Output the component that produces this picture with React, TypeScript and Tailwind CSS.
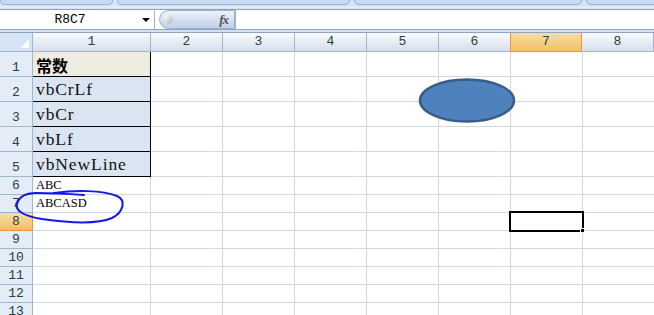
import React from "react";

const cols = ["1", "2", "3", "4", "5", "6", "7", "8"];
const colWidths = ["w-[118px]", "w-[72px]", "w-[72px]", "w-[72px]", "w-[72px]", "w-[72px]", "w-[72px]", "w-[72px]"];

const rows = [
  { n: 1, h: "h-[25px]", text: "常数", kind: "title" },
  { n: 2, h: "h-[25px]", text: "vbCrLf", kind: "const" },
  { n: 3, h: "h-[25px]", text: "vbCr", kind: "const" },
  { n: 4, h: "h-[25px]", text: "vbLf", kind: "const" },
  { n: 5, h: "h-[25px]", text: "vbNewLine", kind: "const" },
  { n: 6, h: "h-[18px]", text: "ABC", kind: "plain" },
  { n: 7, h: "h-[18px]", text: "ABCASD", kind: "plain" },
  { n: 8, h: "h-[18px]", text: "", kind: "plain" },
  { n: 9, h: "h-[18px]", text: "", kind: "plain" },
  { n: 10, h: "h-[18px]", text: "", kind: "plain" },
  { n: 11, h: "h-[18px]", text: "", kind: "plain" },
  { n: 12, h: "h-[18px]", text: "", kind: "plain" },
  { n: 13, h: "h-[18px]", text: "", kind: "plain" },
];

const mono = "font-['Liberation_Mono','DejaVu_Sans_Mono',monospace]";
const serif = "font-['Liberation_Serif','Times_New_Roman',serif]";

function FirstCell({ text, kind }: { text: string; kind: string }) {
  if (kind === "title") {
    return (
      <div className="w-[118px] shrink-0 h-full bg-[#eeece1] border-r border-b border-black flex items-end pl-[3px] pb-[1px]">
        <span className="font-['Noto_Sans_CJK_SC',sans-serif] font-bold text-[16px] leading-[20px] text-black">
          {text}
        </span>
      </div>
    );
  }
  if (kind === "const") {
    return (
      <div className="w-[118px] shrink-0 h-full bg-[#dbe5f1] border-r border-b border-black flex items-end pl-[3px] pb-[2px]">
        <span className={`${serif} text-[17.5px] leading-[20px] tracking-[0.9px] text-[#111]`}>{text}</span>
      </div>
    );
  }
  return (
    <div className="w-[118px] shrink-0 h-full border-r border-b border-[#d0d7e5] flex items-end pl-[3px] pb-[1px]">
      <span className={`${serif} text-[12.5px] leading-[15px] text-black`}>{text}</span>
    </div>
  );
}

export default function App() {
  return (
    <div className="relative w-[654px] h-[315px] overflow-hidden bg-white">
      {/* ribbon tail */}
      <div className="h-[7px] bg-[#dbe6f4] flex gap-[4px] overflow-hidden">
        <div className="w-[113px] shrink-0 h-[6px] -mt-px bg-[#c9dbf2] border border-[#98b4d9] rounded-b-[4px]" />
        <div className="w-[233px] shrink-0 h-[6px] -mt-px bg-[#c9dbf2] border border-[#98b4d9] rounded-b-[4px]" />
        <div className="w-[228px] shrink-0 h-[6px] -mt-px bg-[#c9dbf2] border border-[#98b4d9] rounded-b-[4px]" />
        <div className="w-[80px] shrink-0 h-[6px] -mt-px bg-[#c9dbf2] border border-[#98b4d9] rounded-b-[4px]" />
      </div>
      <div className="h-[3px] bg-gradient-to-b from-[#eef4fb] to-[#cfdcee] border-b border-[#8ea4c1]" />

      {/* formula bar */}
      <div className="h-[19px] flex bg-white">
        <div className="w-[155px] shrink-0 relative flex items-center justify-center border-r border-[#a3b5cc]">
          <span className={`${mono} text-[13px] text-black -ml-[14px]`}>R8C7</span>
          <div className="absolute right-[4px] top-[8px] w-0 h-0 border-l-[4px] border-r-[4px] border-t-[4px] border-l-transparent border-r-transparent border-t-black" />
        </div>
        <div className="w-[4px] shrink-0 bg-white" />
        <div className="w-[76px] shrink-0 h-full relative rounded-l-full bg-gradient-to-b from-[#eef3fa] via-[#d6e1f1] to-[#bfd0e8] border border-[#9cb1cf] flex items-center justify-end pr-[6px]">
          <div className="absolute left-[4px] top-[4px] w-[9px] h-[9px] rounded-full bg-gradient-to-br from-white to-[#a9b6c6]" />
          <span className="font-['Liberation_Serif',serif] italic font-bold text-[13px] text-[#555] tracking-[-1px]">fx</span>
        </div>
        <div className="flex-1 border-l border-[#a3b5cc] bg-white" />
      </div>
      <div className="h-[4px] bg-[#d5e1f0] border-t border-[#8ea4c1] border-b border-b-[#8ea4c1]" />

      {/* column headers */}
      <div className="flex h-[19px]">
        <div className="w-[33px] shrink-0 relative bg-[#d7e4f5] border-r border-b border-[#9eb6ce]">
          <div className="absolute right-[3px] bottom-[3px] w-[9px] h-[9px] bg-gradient-to-br from-[#d7e4f5] from-50% to-white to-50%" />
        </div>
        {cols.map((c, i) =>
          c === "7" ? (
            <div
              key={c}
              className={`${colWidths[i]} shrink-0 flex items-center justify-center bg-gradient-to-b from-[#f9dda6] to-[#f1c060] border-r border-b border-[#f29536] border-l border-l-[#f29536] -ml-px`}
            >
              <span className={`${mono} text-[13px] text-[#27413e]`}>{c}</span>
            </div>
          ) : (
            <div
              key={c}
              className={`${colWidths[i]} shrink-0 flex items-center justify-center bg-gradient-to-b from-[#f9fbfd] to-[#d6dfec] border-r border-b border-[#9eb6ce]`}
            >
              <span className={`${mono} text-[13px] text-[#27413e]`}>{c}</span>
            </div>
          )
        )}
      </div>

      {/* rows */}
      {rows.map((r) => (
        <div key={r.n} className={`flex ${r.h}`}>
          {r.n === 8 ? (
            <div className="w-[33px] shrink-0 flex items-end justify-center pb-[1px] bg-gradient-to-b from-[#f9dda6] to-[#f1c060] border-r border-b border-[#f29536]">
              <span className={`${mono} text-[13px] leading-[15px] text-[#27413e]`}>{r.n}</span>
            </div>
          ) : (
            <div className="w-[33px] shrink-0 flex items-end justify-center pb-[1px] bg-[#e4ecf7] border-r border-b border-[#9eb6ce]">
              <span className={`${mono} text-[13px] leading-[15px] text-[#27413e]`}>{r.n}</span>
            </div>
          )}
          <FirstCell text={r.text} kind={r.kind} />
          {cols.slice(1).map((c) => (
            <div key={c} className="w-[72px] shrink-0 h-full border-r border-b border-[#d0d7e5]" />
          ))}
        </div>
      ))}

      {/* shape: blue ellipse */}
      <svg className="absolute left-[417px] top-[77px]" width="100" height="47" viewBox="0 0 100 47">
        <ellipse cx="50" cy="23.5" rx="47" ry="21" fill="#4f81bd" stroke="#385d8a" strokeWidth="2.5" />
      </svg>

      {/* hand-drawn mark */}
      <svg className="absolute left-0 top-0 pointer-events-none" width="654" height="315" viewBox="0 0 654 315">
        <path
          d="M 54 193 C 75 190, 102 190, 117 196 C 126 200, 124 212, 112 218 C 98 224, 70 223, 42 219 C 24 216, 15 211, 17 204 C 19 197, 26 193, 36 193 C 52 193, 70 194, 84 195"
          fill="none"
          stroke="#1218e8"
          strokeWidth="2"
          strokeLinecap="round"
        />
      </svg>

      {/* active cell */}
      <div className="absolute left-[509px] top-[211px] w-[75px] h-[21px] border-2 border-black" />
      <div className="absolute left-[580px] top-[228px] w-[5px] h-[5px] bg-black border border-white" />
    </div>
  );
}
